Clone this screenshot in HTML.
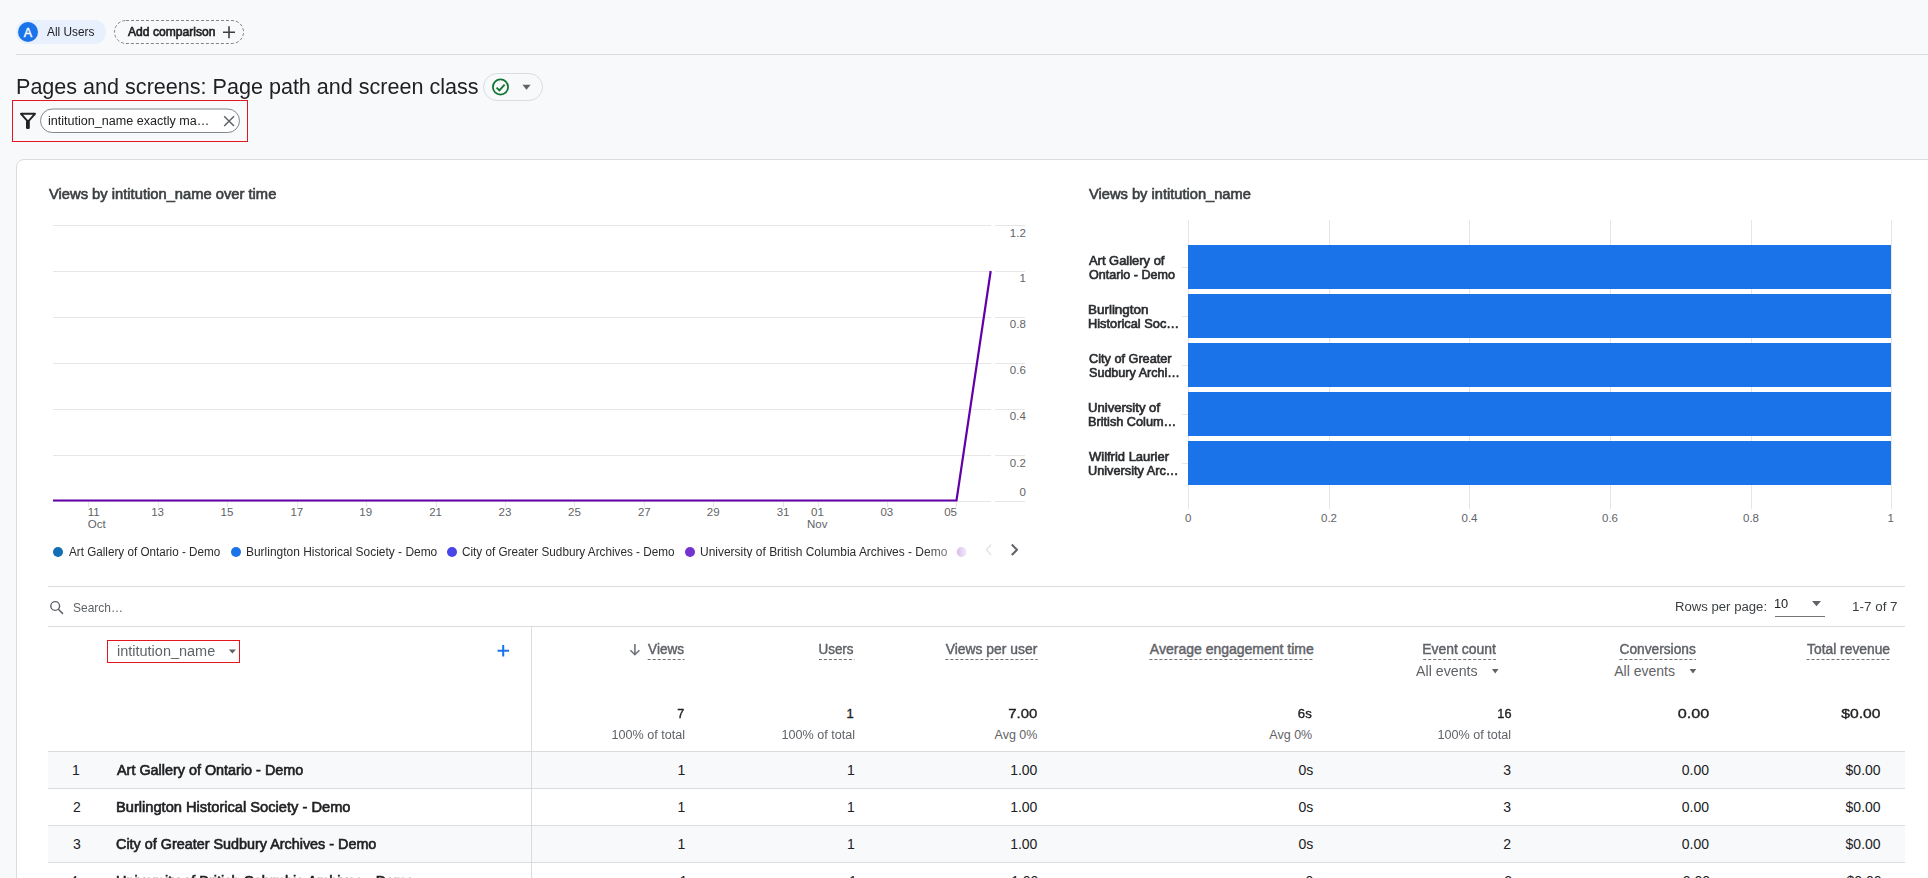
<!DOCTYPE html>
<html><head><meta charset="utf-8">
<style>
html,body{margin:0;padding:0;}
body{width:1928px;height:878px;overflow:hidden;background:#f8f9fa;position:relative;font-family:"Liberation Sans",sans-serif;}
.card{position:absolute;left:16px;top:159px;width:1930px;height:760px;background:#fff;border:1px solid #dadce0;border-radius:8px;box-sizing:border-box;}
svg.full{position:absolute;left:0;top:0;}
.t{position:absolute;white-space:nowrap;line-height:1;display:inline-block;}
.fade{-webkit-mask-image:linear-gradient(to right,#000 90%,rgba(0,0,0,0.6) 100%);mask-image:linear-gradient(to right,#000 90%,rgba(0,0,0,0.6) 100%);}
</style></head><body>
<div class="card"></div>
<svg class="full" width="1928" height="878" viewBox="0 0 1928 878">
<!-- top bar -->
<line x1="16" y1="54.5" x2="1928" y2="54.5" stroke="#dadce0" stroke-width="1"/>
<rect x="16" y="20" width="90" height="24" rx="12" fill="#e8f0fe"/>
<circle cx="28" cy="32" r="10" fill="#1a73e8"/>
<text x="28" y="36.6" text-anchor="middle" font-family="Liberation Sans" font-size="12.5" fill="#fff" stroke="#fff" stroke-width="0.4">A</text>
<rect x="114.5" y="20.5" width="129" height="23" rx="11.5" fill="none" stroke="#80868b" stroke-width="1" stroke-dasharray="3 2"/>
<path d="M223 32.2H235M229 26.2V38.2" stroke="#3c4043" stroke-width="1.6" fill="none"/>
<!-- check chip -->
<rect x="483.5" y="73.5" width="59" height="27" rx="13.5" fill="none" stroke="#dadce0" stroke-width="1"/>
<circle cx="500.5" cy="87" r="7.6" fill="none" stroke="#137333" stroke-width="1.8"/>
<path d="M496.6 87.6L499.4 90.4L504.6 84.6" fill="none" stroke="#137333" stroke-width="1.8"/>
<path d="M522.4 84.8H530.6L526.5 89.8Z" fill="#5f6368"/>
<!-- filter box -->
<rect x="12.5" y="100.5" width="235" height="41" fill="none" stroke="#e3161e" stroke-width="1"/>
<path d="M21 113.8H35L28 121.6Z" fill="none" stroke="#202124" stroke-width="1.9" stroke-linejoin="round"/>
<rect x="26" y="120.5" width="3.8" height="8.5" rx="1.3" fill="#202124"/>
<rect x="40.5" y="109" width="199" height="23.5" rx="11.75" fill="#fff" stroke="#80868b" stroke-width="1"/>
<path d="M224.2 116.3L234 126M234 116.3L224.2 126" stroke="#5f6368" stroke-width="1.5" fill="none"/>
<!-- line chart grid -->
<g stroke="#e6e6e6" stroke-width="1">
<path d="M53 225.5H991M995 225.5H1025M53 271.5H991M995 271.5H1025M53 317.5H991M995 317.5H1025M53 363.5H991M995 363.5H1025M53 409.5H991M995 409.5H1025M53 455.5H991M995 455.5H1025M53 501.5H991M995 501.5H1025"/>
</g>
<g id="xticks" stroke="#e6e6e6" stroke-width="1"><path d="M88.5 501V507M158.5 501V507M227.5 501V507M297.5 501V507M366.5 501V507M436.5 501V507M505.5 501V507M574.5 501V507M644.5 501V507M713.5 501V507M783.5 501V507M818.5 501V507M887.5 501V507M956.5 501V507"/></g>
<polyline points="53,500.5 956.5,500.5 990.7,271" fill="none" stroke="#6200a8" stroke-width="2.2" stroke-linejoin="miter"/>
<!-- legend -->
<circle cx="58" cy="552" r="5" fill="#1170b3"/>
<circle cx="236" cy="552" r="5" fill="#1a73e8"/>
<circle cx="452" cy="552" r="5" fill="#4a45e8"/>
<circle cx="690" cy="552" r="5" fill="#7433cc"/>
<defs><linearGradient id="fg" x1="0" x2="1" y1="0" y2="0"><stop offset="0" stop-color="#d7bdea"/><stop offset="1" stop-color="#f4ecfa"/></linearGradient></defs>
<circle cx="961.7" cy="552" r="5" fill="url(#fg)"/>
<path d="M991 544.5L986.5 549.8L991 555" fill="none" stroke="#e3e5e8" stroke-width="1.5"/>
<path d="M1011.8 544.5L1017 549.8L1011.8 555" fill="none" stroke="#5f6368" stroke-width="2"/>
<!-- bar chart -->
<g stroke="#e6e6e6" stroke-width="1">
<path d="M1188.5 220V509M1329.5 220V509M1469.5 220V509M1610.5 220V509M1751.5 220V509M1891.5 220V509"/>
<path d="M1182 267.5H1188M1182 316.5H1188M1182 365.5H1188M1182 414.5H1188M1182 463.5H1188"/>
</g>
<g fill="#1a73e8">
<rect x="1188" y="245" width="703" height="44"/>
<rect x="1188" y="294" width="703" height="44"/>
<rect x="1188" y="343" width="703" height="44"/>
<rect x="1188" y="392" width="703" height="44"/>
<rect x="1188" y="441" width="703" height="44"/>
</g>
<!-- table -->
<rect x="48" y="751" width="1857" height="37" fill="#f8f9fa"/>
<rect x="48" y="825" width="1857" height="37" fill="#f8f9fa"/>
<g stroke="#dadce0" stroke-width="1">
<path d="M48 586.5H1905M48 626.5H1905M48 751.5H1905M48 788.5H1905M48 825.5H1905M48 862.5H1905M531.5 626V878"/>
</g>
<circle cx="55.2" cy="606" r="4.4" fill="none" stroke="#5f6368" stroke-width="1.4"/>
<path d="M58.4 609.3L63 613.9" stroke="#5f6368" stroke-width="1.5" fill="none"/>
<path d="M1775 616.5H1825" stroke="#757575" stroke-width="1"/>
<path d="M1812 601H1821L1816.5 606.3Z" fill="#5f6368"/>
<rect x="107.5" y="640.5" width="132" height="22" fill="none" stroke="#e3161e" stroke-width="1"/>
<path d="M228.8 649.6H236L232.4 653.6Z" fill="#5f6368"/>
<path d="M497.5 650.8H509M503.2 645V656.6" stroke="#1a73e8" stroke-width="2" fill="none"/>
<path d="M634.9 644.1V654M630.4 650.2L634.9 654.7L639.4 650.2" stroke="#6f7378" stroke-width="1.6" fill="none"/>
<path d="M1492 669H1498.5L1495.25 673.5Z" fill="#5f6368"/>
<path d="M1689.6 669H1696.3L1692.95 673.5Z" fill="#5f6368"/>
<path d="M647.7 659.5H684.6M818.9 659.5H854.4M945.4 659.5H1037.7M1149.4 659.5H1313.4M1423.2 659.5H1495.9M1619.4 659.5H1695.9M1806.5 659.5H1889.4" stroke="#6f7378" stroke-width="1" stroke-dasharray="3 2" fill="none"/>
</svg>
<span id="t0" class="t" style="top:25.74px;font-size:12px;color:#202124;left:46.59px;transform-origin:0 0;transform:scaleX(0.9875);">All Users</span>
<span id="t1" class="t" style="top:25.74px;font-size:12px;color:#202124;-webkit-text-stroke:0.6px currentColor;left:127.79px;transform-origin:0 0;transform:scaleX(1.0080);">Add comparison</span>
<span id="t2" class="t" style="top:75.58px;font-size:22px;color:#202124;left:15.81px;transform-origin:0 0;transform:scaleX(0.9800);">Pages and screens: Page path and screen class</span>
<span id="t3" class="t" style="top:114.84px;font-size:12px;color:#202124;left:48.35px;transform-origin:0 0;transform:scaleX(1.0474);">intitution_name exactly ma…</span>
<span id="t4" class="t" style="top:186.95px;font-size:14px;color:#3c4043;-webkit-text-stroke:0.6px currentColor;left:49.42px;transform-origin:0 0;transform:scaleX(1.0521);">Views by intitution_name over time</span>
<span id="t5" class="t" style="top:187.15px;font-size:14px;color:#3c4043;-webkit-text-stroke:0.6px currentColor;left:1088.61px;transform-origin:0 0;transform:scaleX(1.0471);">Views by intitution_name</span>
<span id="t6" class="t" style="top:227.67px;font-size:11.5px;color:#5f6368;right:902.19px;transform-origin:100% 0;">1.2</span>
<span id="t7" class="t" style="top:273.47px;font-size:11.5px;color:#5f6368;right:902.19px;transform-origin:100% 0;">1</span>
<span id="t8" class="t" style="top:319.47px;font-size:11.5px;color:#5f6368;right:902.19px;transform-origin:100% 0;">0.8</span>
<span id="t9" class="t" style="top:365.47px;font-size:11.5px;color:#5f6368;right:902.19px;transform-origin:100% 0;">0.6</span>
<span id="t10" class="t" style="top:411.47px;font-size:11.5px;color:#5f6368;right:902.19px;transform-origin:100% 0;">0.4</span>
<span id="t11" class="t" style="top:457.67px;font-size:11.5px;color:#5f6368;right:902.19px;transform-origin:100% 0;">0.2</span>
<span id="t12" class="t" style="top:487.17px;font-size:11.5px;color:#5f6368;right:902.19px;transform-origin:100% 0;">0</span>
<span id="t13" class="t" style="top:506.77px;font-size:11.5px;color:#5f6368;left:87.79px;transform-origin:0 0;">11</span>
<span id="t14" class="t" style="top:518.77px;font-size:11.5px;color:#5f6368;left:87.79px;transform-origin:0 0;">Oct</span>
<span id="t15" class="t" style="top:506.77px;font-size:11.5px;color:#5f6368;left:151.22px;transform-origin:0 0;">13</span>
<span id="t16" class="t" style="top:506.77px;font-size:11.5px;color:#5f6368;left:220.60px;transform-origin:0 0;">15</span>
<span id="t17" class="t" style="top:506.77px;font-size:11.5px;color:#5f6368;left:290.47px;transform-origin:0 0;">17</span>
<span id="t18" class="t" style="top:506.77px;font-size:11.5px;color:#5f6368;left:359.35px;transform-origin:0 0;">19</span>
<span id="t19" class="t" style="top:506.77px;font-size:11.5px;color:#5f6368;left:429.23px;transform-origin:0 0;">21</span>
<span id="t20" class="t" style="top:506.77px;font-size:11.5px;color:#5f6368;left:498.61px;transform-origin:0 0;">23</span>
<span id="t21" class="t" style="top:506.77px;font-size:11.5px;color:#5f6368;left:568.00px;transform-origin:0 0;">25</span>
<span id="t22" class="t" style="top:506.77px;font-size:11.5px;color:#5f6368;left:637.88px;transform-origin:0 0;">27</span>
<span id="t23" class="t" style="top:506.77px;font-size:11.5px;color:#5f6368;left:706.75px;transform-origin:0 0;">29</span>
<span id="t24" class="t" style="top:506.77px;font-size:11.5px;color:#5f6368;left:776.63px;transform-origin:0 0;">31</span>
<span id="t25" class="t" style="top:506.77px;font-size:11.5px;color:#5f6368;left:811.07px;transform-origin:0 0;">01</span>
<span id="t26" class="t" style="top:518.77px;font-size:11.5px;color:#5f6368;left:807.07px;transform-origin:0 0;">Nov</span>
<span id="t27" class="t" style="top:506.77px;font-size:11.5px;color:#5f6368;left:880.45px;transform-origin:0 0;">03</span>
<span id="t28" class="t" style="top:506.77px;font-size:11.5px;color:#5f6368;right:971.00px;transform-origin:100% 0;">05</span>
<span id="t29" class="t" style="top:545.74px;font-size:12px;color:#2a2c2f;left:68.78px;transform-origin:0 0;transform:scaleX(0.9731);">Art Gallery of Ontario - Demo</span>
<span id="t30" class="t" style="top:545.74px;font-size:12px;color:#2a2c2f;left:245.80px;transform-origin:0 0;transform:scaleX(0.9958);">Burlington Historical Society - Demo</span>
<span id="t31" class="t" style="top:545.74px;font-size:12px;color:#2a2c2f;left:461.61px;transform-origin:0 0;transform:scaleX(0.9774);">City of Greater Sudbury Archives - Demo</span>
<span id="t32" class="t fade" style="top:545.74px;font-size:12px;color:#2a2c2f;left:699.60px;transform-origin:0 0;transform:scaleX(0.9968);">University of British Columbia Archives - Demo</span>
<span id="t33" class="t" style="top:254.64px;font-size:12px;color:#2a2c2f;-webkit-text-stroke:0.6px currentColor;left:1088.62px;transform-origin:0 0;transform:scaleX(1.0775);">Art Gallery of</span>
<span id="t34" class="t" style="top:268.84px;font-size:12px;color:#2a2c2f;-webkit-text-stroke:0.6px currentColor;left:1088.61px;transform-origin:0 0;transform:scaleX(1.0482);">Ontario - Demo</span>
<span id="t35" class="t" style="top:303.64px;font-size:12px;color:#2a2c2f;-webkit-text-stroke:0.6px currentColor;left:1087.51px;transform-origin:0 0;transform:scaleX(1.1189);">Burlington</span>
<span id="t36" class="t" style="top:317.84px;font-size:12px;color:#2a2c2f;-webkit-text-stroke:0.6px currentColor;left:1087.55px;transform-origin:0 0;transform:scaleX(1.0679);">Historical Soc…</span>
<span id="t37" class="t" style="top:352.64px;font-size:12px;color:#2a2c2f;-webkit-text-stroke:0.6px currentColor;left:1088.61px;transform-origin:0 0;transform:scaleX(1.0582);">City of Greater</span>
<span id="t38" class="t" style="top:366.84px;font-size:12px;color:#2a2c2f;-webkit-text-stroke:0.6px currentColor;left:1088.61px;transform-origin:0 0;transform:scaleX(1.0477);">Sudbury Archi…</span>
<span id="t39" class="t" style="top:401.64px;font-size:12px;color:#2a2c2f;-webkit-text-stroke:0.6px currentColor;left:1087.53px;transform-origin:0 0;transform:scaleX(1.0909);">University of</span>
<span id="t40" class="t" style="top:415.84px;font-size:12px;color:#2a2c2f;-webkit-text-stroke:0.6px currentColor;left:1087.55px;transform-origin:0 0;transform:scaleX(1.0598);">British Colum…</span>
<span id="t41" class="t" style="top:450.64px;font-size:12px;color:#2a2c2f;-webkit-text-stroke:0.6px currentColor;left:1088.62px;transform-origin:0 0;transform:scaleX(1.0813);">Wilfrid Laurier</span>
<span id="t42" class="t" style="top:464.84px;font-size:12px;color:#2a2c2f;-webkit-text-stroke:0.6px currentColor;left:1087.55px;transform-origin:0 0;transform:scaleX(1.0607);">University Arc…</span>
<span id="t43" class="t" style="top:513.47px;font-size:11.5px;color:#5f6368;left:1185.00px;transform-origin:0 0;">0</span>
<span id="t44" class="t" style="top:513.47px;font-size:11.5px;color:#5f6368;left:1321.00px;transform-origin:0 0;">0.2</span>
<span id="t45" class="t" style="top:513.47px;font-size:11.5px;color:#5f6368;left:1461.50px;transform-origin:0 0;">0.4</span>
<span id="t46" class="t" style="top:513.47px;font-size:11.5px;color:#5f6368;left:1602.00px;transform-origin:0 0;">0.6</span>
<span id="t47" class="t" style="top:513.47px;font-size:11.5px;color:#5f6368;left:1743.00px;transform-origin:0 0;">0.8</span>
<span id="t48" class="t" style="top:513.47px;font-size:11.5px;color:#5f6368;left:1887.50px;transform-origin:0 0;">1</span>
<span id="t49" class="t" style="top:600.57px;font-size:13.5px;color:#5f6368;left:73.11px;transform-origin:0 0;transform:scaleX(0.8889);">Search…</span>
<span id="t50" class="t" style="top:601.02px;font-size:12.5px;color:#3c4043;left:1675.17px;transform-origin:0 0;transform:scaleX(1.0512);">Rows per page:</span>
<span id="t51" class="t" style="top:597.92px;font-size:12.5px;color:#202124;left:1774.17px;transform-origin:0 0;transform:scaleX(1.0231);">10</span>
<span id="t52" class="t" style="top:601.02px;font-size:12.5px;color:#3c4043;left:1852.33px;transform-origin:0 0;transform:scaleX(1.0756);">1-7 of 7</span>
<span id="t53" class="t" style="top:644.15px;font-size:14px;color:#5f6368;left:116.59px;transform-origin:0 0;transform:scaleX(1.0347);">intitution_name</span>
<span id="t54" class="t dash" style="top:642.05px;font-size:14px;color:#5f6368;-webkit-text-stroke:0.45px currentColor;right:1243.78px;transform-origin:100% 0;transform:scaleX(0.9711);">Views</span>
<span id="t55" class="t dash" style="top:642.05px;font-size:14px;color:#5f6368;-webkit-text-stroke:0.45px currentColor;right:1074.17px;transform-origin:100% 0;transform:scaleX(0.9595);">Users</span>
<span id="t56" class="t dash" style="top:642.05px;font-size:14px;color:#5f6368;-webkit-text-stroke:0.45px currentColor;right:890.59px;transform-origin:100% 0;transform:scaleX(0.9925);">Views per user</span>
<span id="t57" class="t dash" style="top:642.05px;font-size:14px;color:#5f6368;-webkit-text-stroke:0.45px currentColor;right:614.19px;transform-origin:100% 0;">Average engagement time</span>
<span id="t58" class="t dash" style="top:642.05px;font-size:14px;color:#5f6368;-webkit-text-stroke:0.45px currentColor;right:432.19px;transform-origin:100% 0;transform:scaleX(0.9959);">Event count</span>
<span id="t59" class="t dash" style="top:642.05px;font-size:14px;color:#5f6368;-webkit-text-stroke:0.45px currentColor;right:232.19px;transform-origin:100% 0;transform:scaleX(0.9808);">Conversions</span>
<span id="t60" class="t dash" style="top:642.05px;font-size:14px;color:#5f6368;-webkit-text-stroke:0.45px currentColor;right:38.20px;transform-origin:100% 0;transform:scaleX(0.9869);">Total revenue</span>
<span id="t61" class="t" style="top:663.85px;font-size:14px;color:#5f6368;left:1415.59px;transform-origin:0 0;transform:scaleX(1.0150);">All events</span>
<span id="t62" class="t" style="top:663.85px;font-size:14px;color:#5f6368;left:1614.19px;transform-origin:0 0;">All events</span>
<span id="t63" class="t" style="top:706.90px;font-size:13px;color:#202124;-webkit-text-stroke:0.35px currentColor;right:1243.78px;transform-origin:100% 0;transform:scaleX(0.9714);">7</span>
<span id="t64" class="t" style="top:706.90px;font-size:13px;color:#202124;-webkit-text-stroke:0.35px currentColor;right:1074.19px;transform-origin:100% 0;">1</span>
<span id="t65" class="t" style="top:706.90px;font-size:13px;color:#202124;-webkit-text-stroke:0.35px currentColor;right:890.64px;transform-origin:100% 0;transform:scaleX(1.1480);">7.00</span>
<span id="t66" class="t" style="top:706.90px;font-size:13px;color:#202124;-webkit-text-stroke:0.35px currentColor;right:615.80px;transform-origin:100% 0;transform:scaleX(1.0143);">6s</span>
<span id="t67" class="t" style="top:706.90px;font-size:13px;color:#202124;-webkit-text-stroke:0.35px currentColor;right:417.00px;transform-origin:100% 0;transform:scaleX(0.9786);">16</span>
<span id="t68" class="t" style="top:706.90px;font-size:13px;color:#202124;-webkit-text-stroke:0.35px currentColor;right:219.00px;transform-origin:100% 0;transform:scaleX(1.2440);">0.00</span>
<span id="t69" class="t" style="top:706.90px;font-size:13px;color:#202124;-webkit-text-stroke:0.35px currentColor;right:47.43px;transform-origin:100% 0;transform:scaleX(1.2061);">$0.00</span>
<span id="t70" class="t" style="top:728.92px;font-size:12.5px;color:#5f6368;right:1243.19px;transform-origin:100% 0;transform:scaleX(1.0083);">100% of total</span>
<span id="t71" class="t" style="top:728.92px;font-size:12.5px;color:#5f6368;right:1073.19px;transform-origin:100% 0;transform:scaleX(1.0083);">100% of total</span>
<span id="t72" class="t" style="top:728.92px;font-size:12.5px;color:#5f6368;right:890.60px;transform-origin:100% 0;">Avg 0%</span>
<span id="t73" class="t" style="top:728.92px;font-size:12.5px;color:#5f6368;right:615.79px;transform-origin:100% 0;">Avg 0%</span>
<span id="t74" class="t" style="top:728.92px;font-size:12.5px;color:#5f6368;right:417.00px;transform-origin:100% 0;transform:scaleX(1.0083);">100% of total</span>
<span id="t75" class="t" style="top:763.15px;font-size:14px;color:#202124;left:72.00px;transform-origin:0 0;">1</span>
<span id="t76" class="t" style="top:763.15px;font-size:14px;color:#202124;-webkit-text-stroke:0.6px currentColor;left:116.62px;transform-origin:0 0;transform:scaleX(1.0275);">Art Gallery of Ontario - Demo</span>
<span id="t77" class="t" style="top:763.15px;font-size:14px;color:#202124;right:1242.79px;transform-origin:100% 0;">1</span>
<span id="t78" class="t" style="top:763.15px;font-size:14px;color:#202124;right:1073.19px;transform-origin:100% 0;">1</span>
<span id="t79" class="t" style="top:763.15px;font-size:14px;color:#202124;right:890.60px;transform-origin:100% 0;">1.00</span>
<span id="t80" class="t" style="top:763.15px;font-size:14px;color:#202124;right:614.79px;transform-origin:100% 0;">0s</span>
<span id="t81" class="t" style="top:763.15px;font-size:14px;color:#202124;right:417.00px;transform-origin:100% 0;">3</span>
<span id="t82" class="t" style="top:763.15px;font-size:14px;color:#202124;right:219.00px;transform-origin:100% 0;">0.00</span>
<span id="t83" class="t" style="top:763.15px;font-size:14px;color:#202124;right:47.39px;transform-origin:100% 0;">$0.00</span>
<span id="t84" class="t" style="top:800.15px;font-size:14px;color:#202124;left:73.00px;transform-origin:0 0;">2</span>
<span id="t85" class="t" style="top:800.15px;font-size:14px;color:#202124;-webkit-text-stroke:0.6px currentColor;left:115.59px;transform-origin:0 0;transform:scaleX(1.0464);">Burlington Historical Society - Demo</span>
<span id="t86" class="t" style="top:800.15px;font-size:14px;color:#202124;right:1242.79px;transform-origin:100% 0;">1</span>
<span id="t87" class="t" style="top:800.15px;font-size:14px;color:#202124;right:1073.19px;transform-origin:100% 0;">1</span>
<span id="t88" class="t" style="top:800.15px;font-size:14px;color:#202124;right:890.60px;transform-origin:100% 0;">1.00</span>
<span id="t89" class="t" style="top:800.15px;font-size:14px;color:#202124;right:614.79px;transform-origin:100% 0;">0s</span>
<span id="t90" class="t" style="top:800.15px;font-size:14px;color:#202124;right:417.00px;transform-origin:100% 0;">3</span>
<span id="t91" class="t" style="top:800.15px;font-size:14px;color:#202124;right:219.00px;transform-origin:100% 0;">0.00</span>
<span id="t92" class="t" style="top:800.15px;font-size:14px;color:#202124;right:47.39px;transform-origin:100% 0;">$0.00</span>
<span id="t93" class="t" style="top:837.15px;font-size:14px;color:#202124;left:73.00px;transform-origin:0 0;">3</span>
<span id="t94" class="t" style="top:837.15px;font-size:14px;color:#202124;-webkit-text-stroke:0.6px currentColor;left:115.59px;transform-origin:0 0;transform:scaleX(1.0264);">City of Greater Sudbury Archives - Demo</span>
<span id="t95" class="t" style="top:837.15px;font-size:14px;color:#202124;right:1242.79px;transform-origin:100% 0;">1</span>
<span id="t96" class="t" style="top:837.15px;font-size:14px;color:#202124;right:1073.19px;transform-origin:100% 0;">1</span>
<span id="t97" class="t" style="top:837.15px;font-size:14px;color:#202124;right:890.60px;transform-origin:100% 0;">1.00</span>
<span id="t98" class="t" style="top:837.15px;font-size:14px;color:#202124;right:614.79px;transform-origin:100% 0;">0s</span>
<span id="t99" class="t" style="top:837.15px;font-size:14px;color:#202124;right:417.00px;transform-origin:100% 0;">2</span>
<span id="t100" class="t" style="top:837.15px;font-size:14px;color:#202124;right:219.00px;transform-origin:100% 0;">0.00</span>
<span id="t101" class="t" style="top:837.15px;font-size:14px;color:#202124;right:47.39px;transform-origin:100% 0;">$0.00</span>
<span id="t102" class="t" style="top:874.15px;font-size:14px;color:#202124;left:70.00px;transform-origin:0 0;">4</span>
<span id="t103" class="t" style="top:874.15px;font-size:14px;color:#202124;-webkit-text-stroke:0.6px currentColor;left:115.59px;transform-origin:0 0;transform:scaleX(1.0300);">University of British Columbia Archives - Demo</span>
<span id="t104" class="t" style="top:874.15px;font-size:14px;color:#202124;right:1240.79px;transform-origin:100% 0;">1</span>
<span id="t105" class="t" style="top:874.15px;font-size:14px;color:#202124;right:1071.19px;transform-origin:100% 0;">1</span>
<span id="t106" class="t" style="top:874.15px;font-size:14px;color:#202124;right:889.60px;transform-origin:100% 0;">1.00</span>
<span id="t107" class="t" style="top:874.15px;font-size:14px;color:#202124;right:607.79px;transform-origin:100% 0;">0s</span>
<span id="t108" class="t" style="top:874.15px;font-size:14px;color:#202124;right:416.00px;transform-origin:100% 0;">2</span>
<span id="t109" class="t" style="top:874.15px;font-size:14px;color:#202124;right:218.00px;transform-origin:100% 0;">0.00</span>
<span id="t110" class="t" style="top:874.15px;font-size:14px;color:#202124;right:46.39px;transform-origin:100% 0;">$0.00</span>
</body></html>
